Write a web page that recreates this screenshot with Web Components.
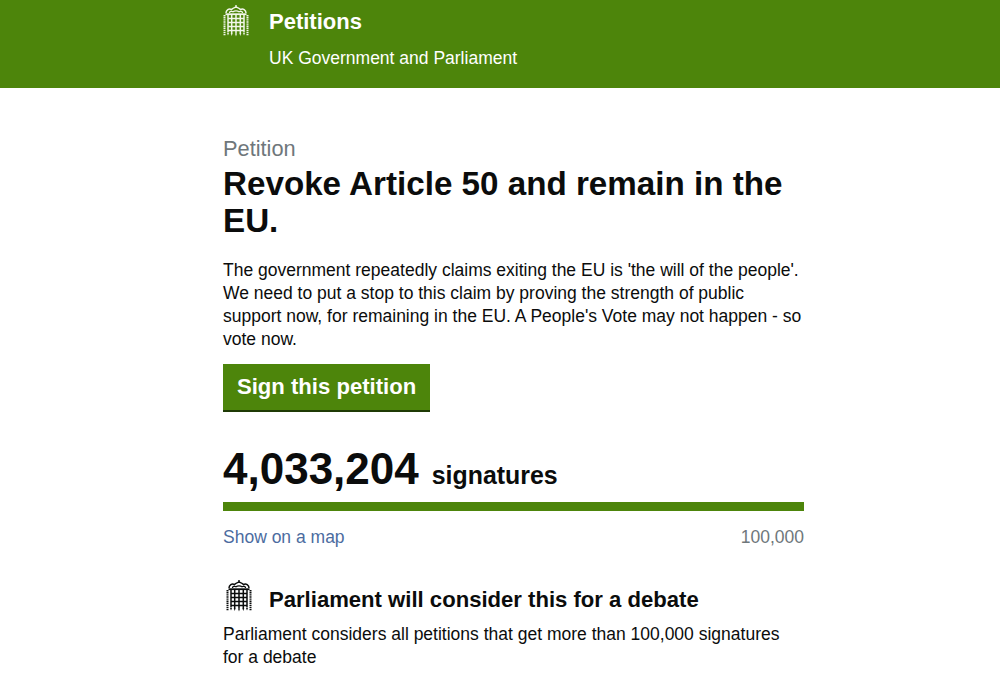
<!DOCTYPE html>
<html lang="en"><head><meta charset="utf-8"><title>Petitions</title>
<style>html,body{margin:0;padding:0;background:#fff;font-family:"Liberation Sans",Arial,sans-serif;color:#0b0c0c;overflow:hidden;height:678px}</style>
</head><body>
<site-header></site-header>
<page-main>
<span slot="kicker">Petition</span>
<span slot="title">Revoke Article 50 and remain in the EU.</span>
<span slot="desc">The government repeatedly claims exiting the EU is 'the will of the people'. We need to put a stop to this claim by proving the strength of public support now, for remaining in the EU. A People's Vote may not happen - so vote now.</span>
<sign-button slot="button">Sign this petition</sign-button>
<signature-count slot="count" count="4,033,204" threshold="100,000"></signature-count>
<debate-note slot="note"></debate-note>
</page-main>
<script>
const portcullis = `<svg viewBox="0 0 26 32" width="26" height="32" fill="currentColor" aria-hidden="true">
<g fill="none" stroke="currentColor">
<path stroke-width="1.5" d="M3 8 C3 5 6 3.2 8.5 4.5 C9.5 3 11.5 2.6 13 2 C14.5 2.6 16.5 3 17.5 4.5 C20 3.2 23 5 23 8"/>
<path stroke-width="1.3" d="M6.5 8 C6.5 6.5 8.5 5.8 10 6.8 C11.5 5.6 14.5 5.6 16 6.8 C17.5 5.8 19.5 6.5 19.5 8"/>
<path stroke-width="1.8" d="M2.5 9.2H23.5"/>
<path stroke-width="1.5" d="M5 10V27.5M8.7 10V28M13 10V28.5M17.3 10V28M21 10V27.5M5 13.5H21M5 17.5H21M5 21.5H21M5 25.5H21"/>
<path stroke-width="2" stroke-dasharray="1.4 .7" d="M1.5 10V31M24.5 10V31"/>
</g>
<path d="M12.3 0h1.4v2h-1.4zM4 28l1 2.5 1-2.5zM7.7 28l1 3 1-3zM12 28.5l1 3 1-3zM16.3 28l1 3 1-3zM20 28l1 2.5 1-2.5z"/>
</svg>`;
customElements.define('site-header', class extends HTMLElement{constructor(){super();this.attachShadow({mode:'open'}).innerHTML=`
<style>:host{display:block;background:#4d850b;height:88px;color:#fff}
.w{width:581px;margin-left:223px;display:grid;grid-template-columns:46px 1fr;padding-top:5px}
.i{height:32px;color:#f2f6ea}
.t{font-size:22px;font-weight:700;line-height:34px}
.s{grid-column:2;font-size:17.5px;line-height:20px;margin-top:9px}</style>
<div class="w"><div class="i">${portcullis}</div><div class="t">Petitions</div><div class="s">UK Government and Parliament</div></div>`}});
customElements.define('page-main', class extends HTMLElement{constructor(){super();this.attachShadow({mode:'open'}).innerHTML=`
<style>:host{display:block;width:581px;margin-left:223px;padding-top:48px}
.k{font-size:21.8px;line-height:25px;color:#6f777b}
h1{margin:0;font-size:33.2px;line-height:37px;font-weight:700;padding-top:4px;color:#0b0c0c}
p{margin:20px 0 13px;font-size:17.5px;line-height:23px;color:#0b0c0c}</style>
<div class="k"><slot name="kicker"></slot></div><h1><slot name="title"></slot></h1><p><slot name="desc"></slot></p>
<slot name="button"></slot><slot name="count"></slot><slot name="note"></slot>`}});
customElements.define('sign-button', class extends HTMLElement{constructor(){super();this.attachShadow({mode:'open'}).innerHTML=`
<style>:host{display:block;width:179px;background:#4d850b;color:#fff;font-size:22.1px;font-weight:700;line-height:46px;height:46px;padding:0 14px;white-space:nowrap;border-bottom:2px solid #1f3a05}</style><slot></slot>`}});
customElements.define('signature-count', class extends HTMLElement{constructor(){super();const c=this.getAttribute('count'),t=this.getAttribute('threshold');this.attachShadow({mode:'open'}).innerHTML=`
<style>:host{display:block;margin-top:32px}
.n{font-size:44px;line-height:50px;font-weight:700;display:flex;align-items:baseline;gap:13px}
.n span{font-size:24.9px;line-height:28px}
.b{height:9px;background:#4d850b;margin-top:8px}
.r{display:flex;justify-content:space-between;font-size:17.5px;line-height:22px;margin-top:15px}
a{color:#4c6c9f;text-decoration:none}.r span{color:#6f777b}</style>
<div class="n">${c} <span>signatures</span></div><div class="b"></div>
<div class="r"><a href="#">Show on a map</a><span>${t}</span></div>`}});
customElements.define('debate-note', class extends HTMLElement{constructor(){super();this.attachShadow({mode:'open'}).innerHTML=`
<style>:host{display:block;margin-top:32px}
.h{display:grid;grid-template-columns:46px 1fr;align-items:end}
.i{height:32px;padding-left:3px;margin-bottom:2px;color:#0b0c0c}
h2{margin:0;font-size:22.1px;line-height:28px;font-weight:700}
p{margin:9px 0 0;font-size:17.5px;line-height:23px}</style>
<div class="h"><div class="i">${portcullis}</div><h2>Parliament will consider this for a debate</h2></div>
<p>Parliament considers all petitions that get more than 100,000 signatures for a debate</p>`}});
</script>
</body></html>
